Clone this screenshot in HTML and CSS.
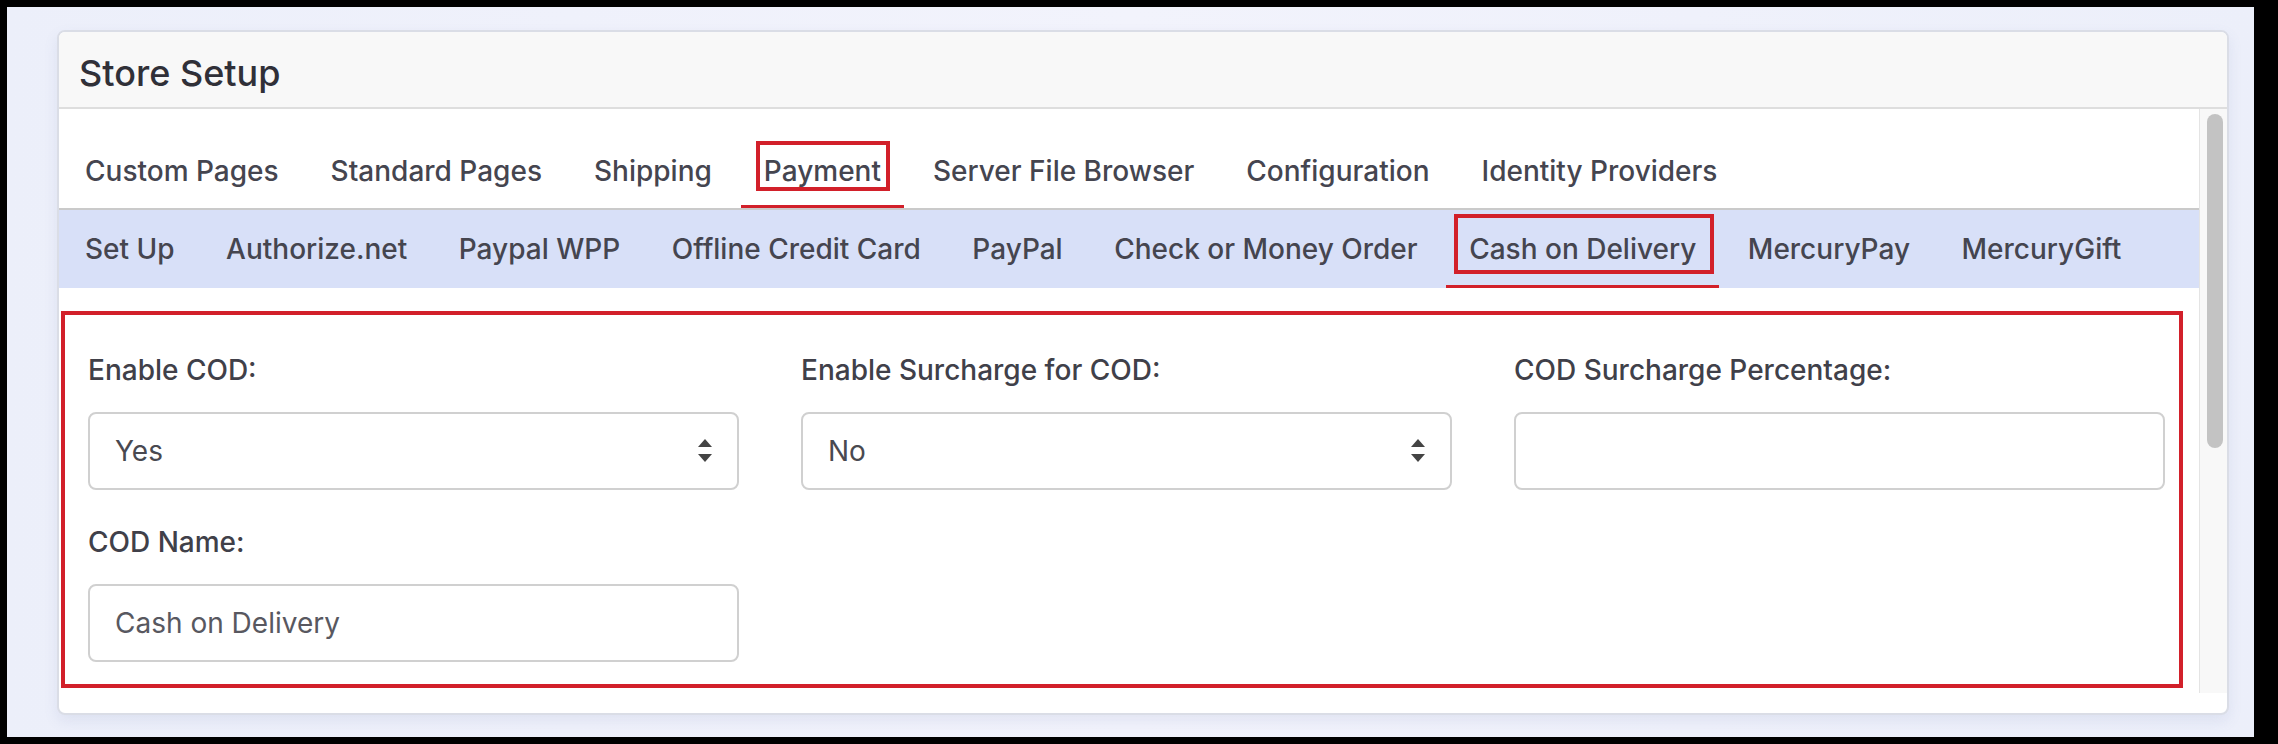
FILE: index.html
```html
<!DOCTYPE html>
<html lang="en">
<head>
<meta charset="UTF-8">
<meta name="viewport" content="width=device-width, initial-scale=1.0">
<title>Store Setup</title>
<link rel="stylesheet" href="styles.css">
</head>
<body>

<div class="screen">
  <div class="card">
    <div class="card-header">Store Setup</div>

    <div class="card-body">
      <div class="scroll-area">
        <!-- top level tabs -->
        <ul class="tabs">
          <li><a href="#">Custom Pages</a></li>
          <li><a href="#">Standard Pages</a></li>
          <li><a href="#">Shipping</a></li>
          <li><a href="#" class="active"><span class="mark">Payment</span></a></li>
          <li><a href="#">Server File Browser</a></li>
          <li><a href="#">Configuration</a></li>
          <li><a href="#">Identity Providers</a></li>
        </ul>

        <!-- payment sub tabs -->
        <ul class="subtabs">
          <li><a href="#">Set Up</a></li>
          <li><a href="#">Authorize.net</a></li>
          <li><a href="#">Paypal WPP</a></li>
          <li><a href="#">Offline Credit Card</a></li>
          <li><a href="#">PayPal</a></li>
          <li><a href="#">Check or Money Order</a></li>
          <li><a href="#" class="active"><span class="mark">Cash on Delivery</span></a></li>
          <li><a href="#">MercuryPay</a></li>
          <li><a href="#">MercuryGift</a></li>
        </ul>

        <div class="tab-pane">
          <div class="form-row">
            <div class="field">
              <label>Enable COD:</label>
              <div class="select-wrap">
                <select>
                  <option selected>Yes</option>
                  <option>No</option>
                </select>
                <svg class="caret" width="14" height="23" viewBox="0 0 14 23"><polygon points="7,0 14,8 0,8"/><polygon points="0,15 14,15 7,23"/></svg>
              </div>
            </div>
            <div class="field">
              <label>Enable Surcharge for COD:</label>
              <div class="select-wrap">
                <select>
                  <option>Yes</option>
                  <option selected>No</option>
                </select>
                <svg class="caret" width="14" height="23" viewBox="0 0 14 23"><polygon points="7,0 14,8 0,8"/><polygon points="0,15 14,15 7,23"/></svg>
              </div>
            </div>
            <div class="field">
              <label>COD Surcharge Percentage:</label>
              <input type="text" value="">
            </div>
          </div>
          <div class="form-row second">
            <div class="field">
              <label>COD Name:</label>
              <input type="text" value="Cash on Delivery">
            </div>
          </div>
        </div>
      </div>

      <div class="scrollbar"><div class="thumb"></div></div>
    </div>
  </div>
</div>

</body>
</html>
```

FILE: styles.css
```css
html, body {
  margin: 0;
  padding: 0;
  background: #000;
}
body {
  font-family: Inter, "Noto Sans", sans-serif;
  color: #45454f;
}
.screen {
  margin: 7px 24px 7px 7px;
  height: 730px;
  box-sizing: border-box;
  padding: 23px 25px 0 50px;
  background: linear-gradient(90deg, #eceffa 0%, #f2f3fc 50%, #eceffa 100%);
}
.card {
  background: #fff;
  border: 2px solid #dadde6;
  border-radius: 8px;
  box-shadow: 0 6px 14px rgba(110, 120, 170, 0.12);
  padding-bottom: 20px;
}
.card-header {
  background: #f8f8f8;
  border-bottom: 2px solid #dedede;
  border-radius: 6px 6px 0 0;
  font-size: 36px;
  line-height: 45px;
  font-weight: 500;
  color: #303038;
  padding: 19px 20px 11px;
}
.card-body {
  display: flex;
  height: 584px;
}
.scroll-area {
  flex: 1;
  overflow: hidden;
}
.scrollbar {
  width: 28px;
  background: #f8f8f8;
  border-left: 1px solid #e4e4e4;
  padding: 5px 0 0 7px;
  box-sizing: border-box;
}
.thumb {
  width: 16px;
  height: 334px;
  border-radius: 8px;
  background: #c3c3c3;
}

/* tabs */
.tabs, .subtabs {
  list-style: none;
  margin: 0;
  display: flex;
}
.tabs {
  gap: 6px;
  padding: 28px 0 0 3px;
  border-bottom: 2px solid #cacaca;
}
.subtabs {
  gap: 5.5px;
  padding: 0 0 0 3px;
  background: #d8e0f8;
}
.tabs a, .subtabs a {
  display: block;
  text-decoration: none;
  color: #45454f;
  font-size: 28px;
  font-weight: 500;
  line-height: 42px;
  padding: 13px 23px 13px;
  border-bottom: 3px solid transparent;
}
.subtabs a {
  padding: 18px 23px 15px;
}
.tabs a.active, .subtabs a.active {
  border-bottom-color: #d2202a;
}
/* red highlight drawn around the selected labels */
.mark {
  display: inline-block;
  line-height: 28px;
  border: 4px solid #d2202a;
  padding: 12px 5px 2px 4px;
  margin: -16px -9px -6px -8px;
}
.subtabs .mark {
  padding: 17px 14px 7px 11px;
  margin: -21px -18px -11px -15px;
}

/* form */
.tab-pane {
  margin: 23px 16px 0 2px;
  border: 4px solid #d2202a;
  padding: 34px 14px 22px 23px;
}
.form-row {
  display: grid;
  grid-template-columns: 1fr 1fr 1fr;
  column-gap: 62px;
}
.form-row.second {
  margin-top: 31px;
}
.field label {
  display: block;
  font-size: 28px;
  line-height: 42px;
  font-weight: 500;
  color: #404049;
  margin-bottom: 21px;
}
.select-wrap {
  position: relative;
}
select, input {
  display: block;
  width: 100%;
  height: 78px;
  box-sizing: border-box;
  border: 2px solid #d0d0d0;
  border-radius: 8px;
  background: #fff;
  font-family: Inter, "Noto Sans", sans-serif;
  font-size: 28px;
  color: #494950;
  padding: 0 25px;
  appearance: none;
  -webkit-appearance: none;
  outline: none;
}
input {
  color: #585860;
}
.caret {
  position: absolute;
  right: 27px;
  top: 27px;
  fill: #444;
  pointer-events: none;
}
```
